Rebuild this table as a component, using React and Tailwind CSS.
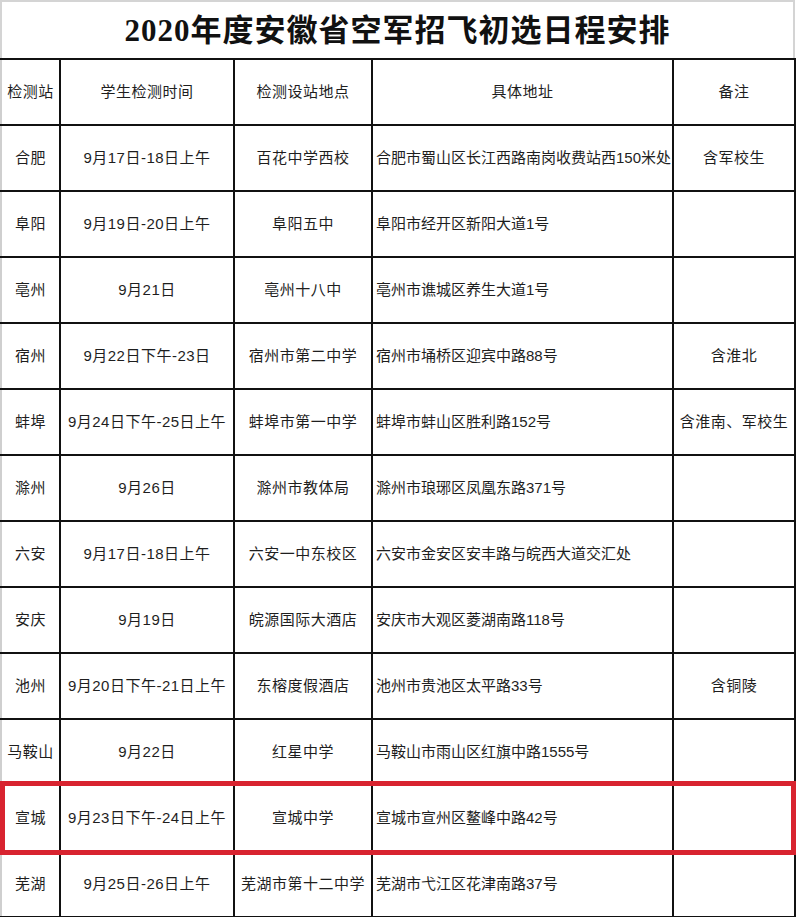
import React from "react";

const rows = [
  ["合肥", "9月17日-18日上午", "百花中学西校", "合肥市蜀山区长江西路南岗收费站西150米处", "含军校生"],
  ["阜阳", "9月19日-20日上午", "阜阳五中", "阜阳市经开区新阳大道1号", ""],
  ["亳州", "9月21日", "亳州十八中", "亳州市谯城区养生大道1号", ""],
  ["宿州", "9月22日下午-23日", "宿州市第二中学", "宿州市埇桥区迎宾中路88号", "含淮北"],
  ["蚌埠", "9月24日下午-25日上午", "蚌埠市第一中学", "蚌埠市蚌山区胜利路152号", "含淮南、军校生"],
  ["滁州", "9月26日", "滁州市教体局", "滁州市琅琊区凤凰东路371号", ""],
  ["六安", "9月17日-18日上午", "六安一中东校区", "六安市金安区安丰路与皖西大道交汇处", ""],
  ["安庆", "9月19日", "皖源国际大酒店", "安庆市大观区菱湖南路118号", ""],
  ["池州", "9月20日下午-21日上午", "东榕度假酒店", "池州市贵池区太平路33号", "含铜陵"],
  ["马鞍山", "9月22日", "红星中学", "马鞍山市雨山区红旗中路1555号", ""],
  ["宣城", "9月23日下午-24日上午", "宣城中学", "宣城市宣州区鳌峰中路42号", ""],
  ["芜湖", "9月25日-26日上午", "芜湖市第十二中学", "芜湖市弋江区花津南路37号", ""],
];

const header = ["检测站", "学生检测时间", "检测设站地点", "具体地址", "备注"];
const widths = ["w-[59px]", "w-[174px]", "w-[138px]", "w-[301px]", "w-[122px]"];

export default function App() {
  return (
    <div
      className="relative w-[796px] h-[917px] overflow-hidden bg-white text-[#1e1e1e]"
      style={{ fontFamily: '"Liberation Sans", "Noto Sans CJK SC", sans-serif' }}
    >
      <div className="h-[58px] flex items-center justify-center border-t-2 border-l-2 border-r-2 border-[#d4d4d4] w-[795px]">
        <h1
          className="text-[31px] font-bold text-[#111] tracking-[1px] leading-none"
          style={{ fontFamily: '"Liberation Serif", "Noto Sans CJK SC", serif' }}
        >
          2020年度安徽省空军招飞初选日程安排
        </h1>
      </div>
      <table className="table-fixed border-collapse w-[794px] text-[15px] tracking-[0.5px]">
        <colgroup>
          {widths.map((w, i) => (
            <col key={i} className={w} />
          ))}
        </colgroup>
        <tbody>
          <tr className="h-[66px]">
            {header.map((h, i) => (
              <td
                key={i}
                className={
                  "border-2 border-[#111] text-center align-middle p-0 whitespace-nowrap" +
                  (i === 0 ? " border-l-[#cfcfcf]" : "")
                }
              >
                {h}
              </td>
            ))}
          </tr>
          {rows.map((r, ri) => (
            <tr key={ri} className="h-[66px]">
              {r.map((c, i) => (
                <td
                  key={i}
                  className={
                    "border-2 border-[#111] align-middle p-0 whitespace-nowrap " +
                    (i === 3 ? "text-left pl-[3px] tracking-normal" : "text-center") +
                    (i === 0 ? " border-l-[#cfcfcf]" : "")
                  }
                >
                  {c}
                </td>
              ))}
            </tr>
          ))}
        </tbody>
      </table>
      <div className="absolute left-0 top-[781px] w-[796px] h-[74px] border-[5px] border-[#d8232f] pointer-events-none" />
    </div>
  );
}
